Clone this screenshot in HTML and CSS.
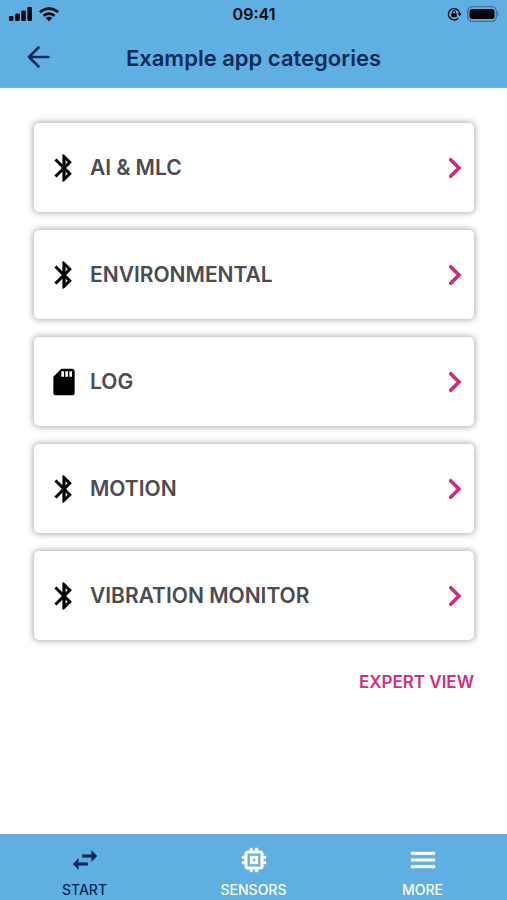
FILE: index.html
```html
<!DOCTYPE html>
<html lang="en">
<head>
<meta charset="utf-8">
<meta name="viewport" content="width=device-width, initial-scale=1">
<title>Example app categories</title>
<link rel="stylesheet" href="styles.css">
</head>
<body>
<svg class="symbols" aria-hidden="true">
  <symbol id="bluetooth" viewBox="0 0 24 24"><path stroke="currentColor" stroke-width=".35" d="M17.71 7.71L12 2h-1v7.59L6.41 5 5 6.41 10.59 12 5 17.59 6.41 19 11 14.41V22h1l5.71-5.71-4.3-4.29 4.3-4.29zM13 5.83l1.88 1.88L13 9.59V5.83zm1.88 10.46L13 18.17v-3.76l1.88 1.88z"/></symbol>
  <symbol id="sdcard" viewBox="0 0 24 24"><path d="M18 2h-8L4.02 8 4 20c0 1.1.9 2 2 2h12c1.1 0 2-.9 2-2V4c0-1.1-.9-2-2-2zm-6 6h-2V4h2v4zm3 0h-2V4h2v4zm3 0h-2V4h2v4z"/></symbol>
  <symbol id="chevron" viewBox="0 0 14 22"><path d="M2.7 2.7L11 11l-8.3 8.3" fill="none" stroke="currentColor" stroke-width="3.6" stroke-linecap="round"/></symbol>
</svg>
<header class="top">
  <div class="status">
    <div class="status-left">
      <svg width="24" height="16" viewBox="0 0 24 16" aria-label="Signal"><rect x="0" y="10" width="4.500" height="5" rx="1.300"/><rect x="6.200" y="7.500" width="4.500" height="7.500" rx="1.300"/><rect x="12.300" y="4.500" width="4.500" height="10.500" rx="1.300"/><rect x="18.400" y="1" width="4.500" height="14" rx="1.300"/></svg>
      <svg width="22" height="16" viewBox="0 0 22 16" aria-label="Wi-Fi"><g fill="none" stroke="currentColor" stroke-width="2.700"><path d="M2 6.200a13 13 0 0 1 18 0"/><path d="M5.500 9.800a8 8 0 0 1 11 0"/></g><path d="M11 15.300l-3.300-3.300a4.700 4.700 0 0 1 6.600 0z"/></svg>
    </div>
    <time class="clock">09:41</time>
    <div class="status-right">
      <svg width="15" height="14" viewBox="0 0 15 14" aria-label="Rotation lock"><path d="M11.200 11.200A5.700 5.700 0 1 1 12.700 6.500" fill="none" stroke="currentColor" stroke-width="1.300"/><path d="M10.600 6.300h4.200l-2.100 3.200z"/><rect x="4.300" y="6.200" width="5.400" height="4" rx=".6"/><path d="M5.500 6.500V5a1.500 1.500 0 0 1 3 0v1.500" fill="none" stroke="currentColor"/></svg>
      <svg width="32" height="16" viewBox="0 0 32 16" aria-label="Battery"><rect x=".7" y=".7" width="28.600" height="14.600" rx="4.500" fill="none" stroke="#3f7595" stroke-width="1.300"/><rect x="2.500" y="3" width="25" height="10" rx="2.500"/><path d="M30.500 5.500c1.700.8 1.700 4.200 0 5z" fill="#3f7595"/></svg>
    </div>
  </div>
  <div class="bar">
    <button class="back" type="button" aria-label="Back"><svg width="24" height="24" viewBox="0 0 24 24"><path d="M22.500 11H3M12.500 1.500L3 11l9.500 9.500" fill="none" stroke="currentColor" stroke-width="2.500" stroke-linecap="round" stroke-linejoin="round"/></svg></button>
    <h1>Example app categories</h1>
  </div>
</header>
<main>
  <ul class="list">
    <li><a class="card" href="#ai"><svg class="icon"><use href="#bluetooth"/></svg><span>AI &amp; MLC</span><svg class="chevron"><use href="#chevron"/></svg></a></li>
    <li><a class="card" href="#environmental"><svg class="icon"><use href="#bluetooth"/></svg><span>ENVIRONMENTAL</span><svg class="chevron"><use href="#chevron"/></svg></a></li>
    <li><a class="card" href="#log"><svg class="icon"><use href="#sdcard"/></svg><span>LOG</span><svg class="chevron"><use href="#chevron"/></svg></a></li>
    <li><a class="card" href="#motion"><svg class="icon"><use href="#bluetooth"/></svg><span>MOTION</span><svg class="chevron"><use href="#chevron"/></svg></a></li>
    <li><a class="card" href="#vibration"><svg class="icon"><use href="#bluetooth"/></svg><span>VIBRATION MONITOR</span><svg class="chevron"><use href="#chevron"/></svg></a></li>
  </ul>
  <button class="expert" type="button">EXPERT VIEW</button>
</main>
<nav class="tabs">
  <a class="tab active" href="#start" aria-current="page"><svg class="icon" viewBox="0 0 24 24"><path stroke="currentColor" stroke-width=".4" stroke-linejoin="round" d="M6.990 11L3 15l3.990 4v-3H14v-2H6.990v-3zM21 9l-3.990-4v3H10v2h7.010v3L21 9z"/></svg><span>START</span></a>
  <a class="tab" href="#sensors"><svg class="icon" viewBox="0 0 24 24"><path stroke="currentColor" stroke-width=".3" d="M15 9H9v6h6V9zm-2 4h-2v-2h2v2zm8-2V9h-2V7c0-1.100-.9-2-2-2h-2V3h-2v2h-2V3H9v2H7c-1.100 0-2 .9-2 2v2H3v2h2v2H3v2h2v2c0 1.100.9 2 2 2h2v2h2v-2h2v2h2v-2h2c1.100 0 2-.9 2-2v-2h2v-2h-2v-2h2zm-4 6H7V7h10v10z"/></svg><span>SENSORS</span></a>
  <a class="tab" href="#more"><svg class="icon" viewBox="0 0 24 24"><path stroke="currentColor" stroke-width=".3" d="M3 18h18v-2H3v2zm0-5h18v-2H3v2zm0-7v2h18V6H3z"/></svg><span>MORE</span></a>
</nav>
</body>
</html>
```
FILE: styles.css
```css
* {
  box-sizing: border-box;
}

body {
  display: flex;
  flex-direction: column;
  min-height: 100vh;
  margin: 0;
  background: #fff;
  color: #4b4b50;
  font-family: Inter, "Liberation Sans", sans-serif;
}

svg {
  display: block;
  flex: none;
  fill: currentColor;
}

.symbols {
  position: absolute;
  width: 0;
  height: 0;
}

a {
  color: inherit;
  text-decoration: none;
}

button {
  padding: 0;
  border: 0;
  background: none;
  color: inherit;
  font: inherit;
  cursor: pointer;
}

.top {
  background: #5fafe2;
  border-bottom: 1px solid #7fb0d8;
  color: #0b2a58;
}

.status {
  display: grid;
  grid-template-columns: 1fr auto 1fr;
  align-items: center;
  height: 28px;
  padding: 0 8px 0 9px;
  color: #05080c;
}

.status-left,
.status-right {
  display: flex;
  align-items: center;
  gap: 5px;
}

.status-right {
  justify-content: flex-end;
}

.clock {
  font-size: 16px;
  font-weight: 600;
  line-height: 28px;
}

.bar {
  display: grid;
  grid-template-columns: 24px 1fr 24px;
  align-items: center;
  height: 59px;
  padding: 0 26px;
}

h1 {
  margin: 0;
  font-size: 22px;
  font-weight: 600;
  line-height: 28px;
  text-align: center;
}

main {
  display: flex;
  flex: 1;
  flex-direction: column;
  align-items: stretch;
  padding: 35px 33px 35px 34px;
}

.list {
  display: grid;
  gap: 18px;
  margin: 0;
  padding: 0;
  list-style: none;
}

.card {
  display: flex;
  align-items: center;
  gap: 10px;
  height: 89px;
  padding: 0 12px 0 14px;
  border-radius: 5px;
  background: #fff;
  box-shadow: 0 0 6px 1px rgba(0, 0, 0, 0.33);
  font-size: 21px;
  font-weight: 600;
  line-height: 28px;
}

.card span {
  flex: 1;
}

.icon {
  width: 32px;
  height: 32px;
}

.card .icon {
  color: #000;
}

.chevron {
  width: 14px;
  height: 22px;
  color: #d12a7c;
}

.expert {
  align-self: flex-end;
  margin-top: 30px;
  color: #d62c80;
  font-size: 17px;
  font-weight: 600;
  line-height: 24px;
}

.tabs {
  display: grid;
  grid-template-columns: repeat(3, 1fr);
  height: 66px;
  padding-top: 10px;
  background: #5fafe2;
  color: #fff;
}

.tab {
  display: flex;
  flex-direction: column;
  align-items: center;
  gap: 6px;
  font-size: 14px;
  font-weight: 500;
  line-height: 16px;
}

.tab.active {
  color: #0b2a58;
}
```
